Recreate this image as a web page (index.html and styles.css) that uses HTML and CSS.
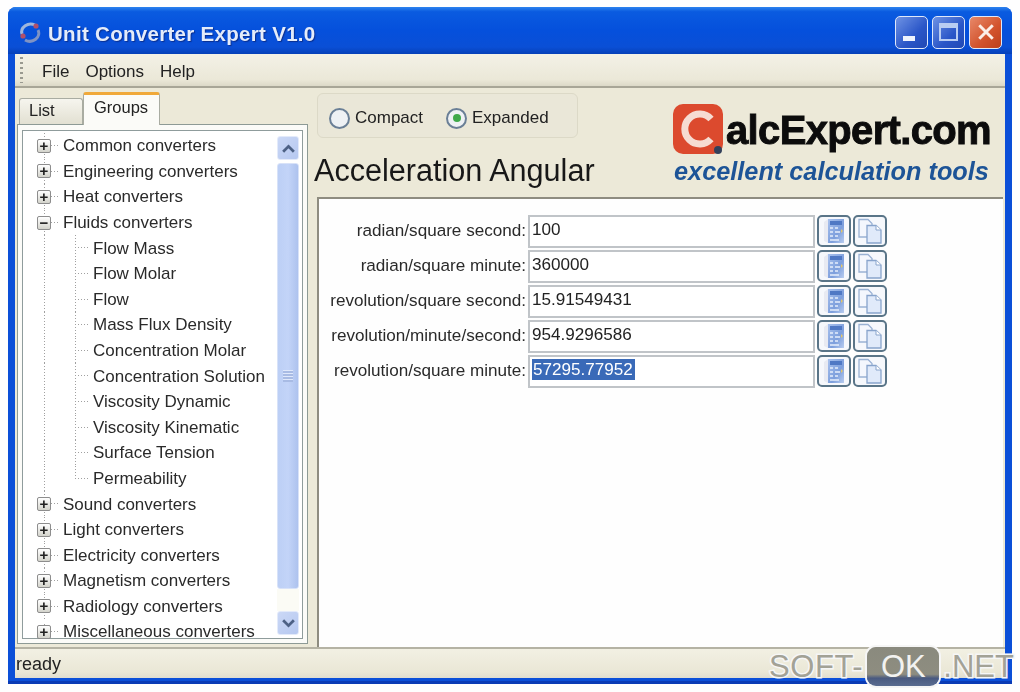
FILE: index.html
```html
<!DOCTYPE html>
<html lang="en">
<head>
    <meta charset="UTF-8">
    <meta name="viewport" content="width=device-width, initial-scale=1.0">
    <title>Unit Converter Expert V1.0</title>
    <link rel="stylesheet" href="styles.css">
</head>
<body>
    <svg class="icon-defs" width="0" height="0">
        <defs>
            <linearGradient id="calcFill" x1="0" y1="0" x2="1" y2="1">
                <stop offset="0" stop-color="#a9c2ee"/>
                <stop offset="0.6" stop-color="#7c9edc"/>
                <stop offset="1" stop-color="#b9cdf0"/>
            </linearGradient>
            <symbol id="calc" viewBox="0 0 24 28">
                <path d="M2 5 L6 2 V26 L2 24 Z" fill="#e8eaf2"/>
                <rect x="6" y="2" width="16" height="24" fill="url(#calcFill)"/>
                <rect x="8" y="4" width="12" height="4" fill="#4f78c4"/>
                <path d="M8 11h3M13 11h3M8 15h3M13 15h5M8 19h3M13 19h3M8 23h9" stroke="#e6eefb" stroke-width="1.6"/>
                <path d="M19 12l2 2-2 2" fill="#e2c56a"/>
            </symbol>
            <symbol id="copy" viewBox="0 0 28 28">
                <path d="M3 2.5 H12 L16 6.5 V20 H3 Z" fill="#f4f7fd" stroke="#9ab2d4" stroke-width="1.3"/>
                <path d="M11 8.5 H20 L25 13 V26 H11 Z" fill="#e0eafa" stroke="#88a4cc" stroke-width="1.3"/>
                <path d="M20 8.5 V13 H25" fill="#fff" stroke="#88a4cc" stroke-width="1"/>
            </symbol>
        </defs>
    </svg>

    <div class="window">
        <header class="titlebar">
            <svg class="app-icon" viewBox="0 0 24 24" width="24" height="24">
                <path d="M4 14 A9 8 0 0 1 17 5" fill="none" stroke="#9fb6dc" stroke-width="3"/>
                <path d="M20 10 A9 8 0 0 1 7 20" fill="none" stroke="#7f93c4" stroke-width="3"/>
                <circle cx="18" cy="6" r="2.6" fill="#b0506a"/>
                <circle cx="5" cy="16" r="2.6" fill="#b0506a"/>
            </svg>
            <span class="title-text">Unit Converter Expert V1.0</span>
            <div class="win-buttons">
                <button class="win-btn"><span class="glyph-min"></span></button>
                <button class="win-btn"><span class="glyph-max"></span></button>
                <button class="win-btn win-close">
                    <svg viewBox="0 0 16 16" width="18" height="18"><path d="M2 2 L14 14 M14 2 L2 14" stroke="#fbeee8" stroke-width="2.6"/></svg>
                </button>
            </div>
        </header>

        <div class="client">
            <nav class="menubar">
                <span class="grip"></span>
                <span class="menu-item">File</span>
                <span class="menu-item">Options</span>
                <span class="menu-item">Help</span>
            </nav>

            <div class="main">
                <aside class="side">
                    <div class="tabs">
                        <span class="tab">List</span>
                        <span class="tab tab-active">Groups</span>
                    </div>
                    <div class="tree-panel">
                        <ul class="tree">
                            <li class="node"><span class="exp">+</span>Common converters</li>
                            <li class="node"><span class="exp">+</span>Engineering converters</li>
                            <li class="node"><span class="exp">+</span>Heat converters</li>
                            <li class="node"><span class="exp">&minus;</span>Fluids converters</li>
                            <li class="leaf">Flow Mass</li>
                            <li class="leaf">Flow Molar</li>
                            <li class="leaf">Flow</li>
                            <li class="leaf">Mass Flux Density</li>
                            <li class="leaf">Concentration Molar</li>
                            <li class="leaf">Concentration Solution</li>
                            <li class="leaf">Viscosity Dynamic</li>
                            <li class="leaf">Viscosity Kinematic</li>
                            <li class="leaf">Surface Tension</li>
                            <li class="leaf">Permeability</li>
                            <li class="node"><span class="exp">+</span>Sound converters</li>
                            <li class="node"><span class="exp">+</span>Light converters</li>
                            <li class="node"><span class="exp">+</span>Electricity converters</li>
                            <li class="node"><span class="exp">+</span>Magnetism converters</li>
                            <li class="node"><span class="exp">+</span>Radiology converters</li>
                            <li class="node"><span class="exp">+</span>Miscellaneous converters</li>
                        </ul>
                        <div class="scrollbar">
                            <div class="sb-btn">
                                <svg viewBox="0 0 14 10" width="15" height="11"><path d="M2 8 L7 3 L12 8" fill="none" stroke="#4d6185" stroke-width="2.6"/></svg>
                            </div>
                            <div class="sb-thumb"><span class="sb-grip"></span></div>
                            <div class="sb-track"></div>
                            <div class="sb-btn">
                                <svg viewBox="0 0 14 10" width="15" height="11"><path d="M2 2 L7 7 L12 2" fill="none" stroke="#4d6185" stroke-width="2.6"/></svg>
                            </div>
                        </div>
                    </div>
                </aside>

                <section class="content">
                    <div class="content-top">
                        <div class="top-left">
                            <div class="view-box">
                                <label class="radio"><span class="radio-dot"></span>Compact</label>
                                <label class="radio"><span class="radio-dot radio-on"></span>Expanded</label>
                            </div>
                            <h1 class="unit-title">Acceleration Angular</h1>
                        </div>
                        <div class="logo">
                            <div class="logo-line">
                                <span class="logo-mark">
                                    <svg viewBox="0 0 50 50" width="50" height="50">
                                        <rect width="50" height="50" rx="10" fill="#dc4a2e"/>
                                        <path d="M38 15 A15 15 0 1 0 38 35" fill="none" stroke="#f6dcd2" stroke-width="7"/>
                                        <circle cx="45" cy="46" r="4" fill="#33405a"/>
                                    </svg>
                                </span>
                                <span class="logo-name">alcExpert.com</span>
                            </div>
                            <div class="logo-tag">excellent calculation tools</div>
                        </div>
                    </div>

                    <div class="results">
                        <div class="row">
                            <span class="row-label">radian/square second:</span>
                            <div class="row-input">100</div>
                            <button class="tool"><svg width="24" height="28"><use href="#calc"/></svg></button>
                            <button class="tool"><svg width="28" height="28"><use href="#copy"/></svg></button>
                        </div>
                        <div class="row">
                            <span class="row-label">radian/square minute:</span>
                            <div class="row-input">360000</div>
                            <button class="tool"><svg width="24" height="28"><use href="#calc"/></svg></button>
                            <button class="tool"><svg width="28" height="28"><use href="#copy"/></svg></button>
                        </div>
                        <div class="row">
                            <span class="row-label">revolution/square second:</span>
                            <div class="row-input">15.91549431</div>
                            <button class="tool"><svg width="24" height="28"><use href="#calc"/></svg></button>
                            <button class="tool"><svg width="28" height="28"><use href="#copy"/></svg></button>
                        </div>
                        <div class="row">
                            <span class="row-label">revolution/minute/second:</span>
                            <div class="row-input">954.9296586</div>
                            <button class="tool"><svg width="24" height="28"><use href="#calc"/></svg></button>
                            <button class="tool"><svg width="28" height="28"><use href="#copy"/></svg></button>
                        </div>
                        <div class="row">
                            <span class="row-label">revolution/square minute:</span>
                            <div class="row-input"><span class="selected">57295.77952</span></div>
                            <button class="tool"><svg width="24" height="28"><use href="#calc"/></svg></button>
                            <button class="tool"><svg width="28" height="28"><use href="#copy"/></svg></button>
                        </div>
                    </div>
                </section>
            </div>

            <footer class="statusbar">ready</footer>
        </div>
    </div>

    <div class="watermark">
        <span class="wm-text wm-soft">SOFT-</span><span class="wm-ok">OK</span><span class="wm-text">.NET</span>
    </div>
</body>
</html>
```

FILE: styles.css
```css
* {
    box-sizing: border-box;
    margin: 0;
    padding: 0;
}

html, body {
    height: 100%;
    overflow: hidden;
}

body {
    background: #fefefe;
    font-family: "Liberation Sans", Arial, sans-serif;
    color: #222;
    padding: 7px 8px 8px 8px;
    position: relative;
}

.icon-defs {
    position: absolute;
}

.window {
    width: 1004px;
    height: 677px;
    display: flex;
    flex-direction: column;
    background: #0b4fd8;
    border-radius: 8px 8px 0 0;
    padding: 0 7px 3px 7px;
    border-bottom: 3px solid #0a3bb5;
    filter: blur(0.45px);
}

/* title bar */
.titlebar {
    height: 47px;
    margin: 0 -7px;
    padding: 6px 7px 0 10px;
    display: flex;
    align-items: center;
    border-radius: 8px 8px 0 0;
    background: linear-gradient(#2d83ee 0, #0a5be0 10%, #0550dc 50%, #0a4fd6 85%, #0640b8 100%);
}

.app-icon {
    margin-right: 6px;
    margin-top: -4px;
}

.title-text {
    font-family: "Liberation Sans", sans-serif;
    font-weight: bold;
    font-size: 20.5px;
    letter-spacing: 0.3px;
    color: #e4ecfa;
    text-shadow: 1px 1px 1px #0a2f90;
    flex: 1;
}

.win-buttons {
    display: flex;
    gap: 4px;
    margin-right: 3px;
    margin-top: -3px;
}

.win-btn {
    width: 33px;
    height: 33px;
    border: 1px solid #dfe8fa;
    border-radius: 5px;
    background: linear-gradient(135deg, #6f93e4, #2a56c8 60%, #2149b4);
    display: flex;
    align-items: center;
    justify-content: center;
}

.win-close {
    background: linear-gradient(135deg, #e8896a, #d2522c 60%, #bd3f1c);
}

.glyph-min {
    width: 12px;
    height: 5px;
    background: #eef3fd;
    margin-top: 12px;
    margin-right: 6px;
}

.glyph-max {
    width: 19px;
    height: 18px;
    border: 2px solid #b9cdf2;
    border-top-width: 5px;
}

/* client area */
.client {
    flex: 1;
    display: flex;
    flex-direction: column;
    background: #ece9d8;
    min-height: 0;
}

.menubar {
    height: 34px;
    display: flex;
    align-items: center;
    padding: 4px 0 0 5px;
    background: linear-gradient(#f3f1e6, #ebe8d8 80%, #dcd9c8);
    border-bottom: 2px solid #a8a697;
    font-size: 17px;
}

.grip {
    width: 3px;
    height: 26px;
    margin-top: -4px;
    margin-right: 19px;
    background: repeating-linear-gradient(#9a9a90 0 2px, transparent 2px 5px);
}

.menu-item {
    margin-right: 16px;
}

.main {
    flex: 1;
    display: flex;
    min-height: 0;
    border-bottom: 2px solid #b5b3a4;
}

/* left side: tabs + tree */
.side {
    width: 291px;
    margin-left: 2px;
    display: flex;
    flex-direction: column;
    padding-bottom: 3px;
}

.tabs {
    height: 36px;
    display: flex;
    align-items: flex-end;
    padding-left: 2px;
    padding-top: 3px;
    font-size: 16.5px;
}

.tab {
    width: 64px;
    height: 26px;
    padding: 2px 0 0 9px;
    background: linear-gradient(#f6f5ee, #e2e0d2);
    border: 1px solid #a9aca2;
    border-bottom: none;
    border-radius: 3px 3px 0 0;
}

.tab-active {
    width: 77px;
    height: 33px;
    padding: 3px 0 0 10px;
    background: #fbfbf8;
    border-top: 3px solid #f0a93a;
    position: relative;
    top: 1px;
}

.tree-panel {
    flex: 1;
    display: flex;
    min-height: 0;
    background: #fbfbf8;
    border: 1px solid #8d9a95;
    padding: 5px 4px 4px 4px;
}

.tree {
    flex: 1;
    list-style: none;
    background: #fff;
    border: 1px solid #8f9c9c;
    border-right: none;
    padding-top: 2px;
    font-size: 17px;
    color: #2a2a2a;
}

.node, .leaf {
    height: 25.6px;
    line-height: 25px;
    white-space: nowrap;
    display: flex;
    align-items: center;
}

.node {
    padding-left: 14px;
    background-image:
        repeating-linear-gradient(90deg, #a0a0a0 0 1px, transparent 1px 3px),
        repeating-linear-gradient(#a0a0a0 0 1px, transparent 1px 3px);
    background-size: 9px 1px, 1px 100%;
    background-position: 28px 12px, 21px 0;
    background-repeat: no-repeat;
}

/* last row touches the bottom of the list */
.node:last-child {
    height: 15px;
    line-height: 15px;
    margin-top: 5px;
    background-position: 28px 7px, 21px 0;
}

.exp {
    width: 14px;
    height: 14px;
    margin-right: 12px;
    border: 1px solid #8d8d8d;
    border-radius: 2px;
    background: linear-gradient(#fff, #d4d4cc);
    color: #222;
    font-size: 15px;
    font-weight: bold;
    line-height: 11px;
    text-align: center;
}

.leaf {
    padding-left: 70px;
    background-image:
        repeating-linear-gradient(90deg, #a0a0a0 0 1px, transparent 1px 3px),
        repeating-linear-gradient(#a0a0a0 0 1px, transparent 1px 3px),
        repeating-linear-gradient(#a0a0a0 0 1px, transparent 1px 3px);
    background-size: 14px 1px, 1px 100%, 1px 100%;
    background-position: 52px 12px, 52px 0, 21px 0;
    background-repeat: no-repeat;
}

.leaf:nth-child(14) {
    background-size: 14px 1px, 1px 13px, 1px 100%;
}

/* scrollbar */
.scrollbar {
    width: 26px;
    display: flex;
    flex-direction: column;
    background: #fff;
    border: 1px solid #8f9c9c;
    border-left: none;
    padding: 5px 3px 3px 0;
}

.sb-btn {
    height: 24px;
    display: flex;
    align-items: center;
    justify-content: center;
    background: linear-gradient(135deg, #cbd8f6, #b6c8f0);
    border: 1px solid #e3eafa;
    border-radius: 3px;
}

.sb-thumb {
    height: 426px;
    margin-top: 3px;
    background: linear-gradient(90deg, #bccff5, #c3d4f8 50%, #adc2ee);
    border: 1px solid #d8e2f8;
    border-radius: 3px;
    display: flex;
    align-items: center;
    justify-content: center;
}

.sb-grip {
    width: 10px;
    height: 12px;
    background: repeating-linear-gradient(#dfe8fb 0 1px, #a8bbe4 1px 3px);
}

.sb-track {
    flex: 1;
    background: #fbfbf5;
}

/* right side */
.content {
    flex: 1;
    display: flex;
    flex-direction: column;
    margin-left: 9px;
    margin-right: 2px;
    min-width: 0;
}

.content-top {
    height: 109px;
    display: flex;
    justify-content: space-between;
    flex-shrink: 0;
}

.top-left {
    padding-top: 5px;
}

.view-box {
    width: 261px;
    height: 45px;
    display: flex;
    align-items: center;
    gap: 23px;
    padding: 5px 0 0 11px;
    border: 1px solid #dcd9c7;
    border-radius: 6px;
    background: #eae7d8;
    font-size: 17px;
}

.radio {
    display: flex;
    align-items: center;
    gap: 5px;
}

.radio-dot {
    width: 21px;
    height: 21px;
    border-radius: 50%;
    border: 2px solid #6a7f96;
    background: #eef1f4;
    display: flex;
    align-items: center;
    justify-content: center;
}

.radio-on::after {
    content: "";
    width: 8px;
    height: 8px;
    border-radius: 50%;
    background: #3fa94a;
}

.unit-title {
    font-size: 30.6px;
    font-weight: normal;
    color: #181818;
    margin-left: -3px;
    margin-top: 16px;
    line-height: 33px;
    white-space: nowrap;
}

.logo {
    width: 322px;
    padding-top: 16px;
    margin-right: 8px;
}

.logo-line {
    display: flex;
    align-items: flex-end;
    height: 50px;
}

.logo-mark {
    display: block;
    height: 50px;
}

.logo-name {
    font-size: 40px;
    font-weight: bold;
    color: #0c0c0c;
    line-height: 44px;
    letter-spacing: -0.65px;
    -webkit-text-stroke: 0.9px #0c0c0c;
    margin: 0 0 2px 3px;
}

.logo-tag {
    font-size: 25.3px;
    font-weight: bold;
    font-style: italic;
    color: #1d5497;
    margin: 3px 0 0 1px;
    white-space: nowrap;
}

.results {
    flex: 1;
    background: #fefefe;
    border-top: 2px solid #8e8c80;
    border-left: 2px solid #8e8c80;
    padding-top: 16px;
    display: flex;
    flex-direction: column;
    gap: 3px;
}

.row {
    height: 32px;
    display: flex;
    align-items: center;
    gap: 2px;
    font-size: 17.1px;
}

.row-label {
    width: 207px;
    text-align: right;
    white-space: nowrap;
    color: #2a2a2a;
}

.row-input {
    width: 287px;
    height: 33px;
    border: 2px solid #c0c4c8;
    padding-left: 2px;
    line-height: 26px;
    background: #fff;
    color: #222;
}

.selected {
    background: #3a6ab8;
    color: #fff;
    padding: 1px 2px 1px 1px;
}

.tool {
    width: 34px;
    height: 32px;
    border: 2px solid #5a7588;
    border-radius: 5px;
    background: #f6f8fc;
    display: flex;
    align-items: center;
    justify-content: center;
}

.statusbar {
    height: 29px;
    padding: 5px 1px;
    font-size: 18px;
    background: linear-gradient(#f2f0e3, #eae7d6 80%, #e0ddd0);
}

/* watermark sits on top of the window */
.watermark {
    position: absolute;
    left: 769px;
    top: 647px;
    height: 39px;
    display: flex;
    align-items: center;
    font-size: 31px;
}

.wm-text {
    color: #a3a296;
    -webkit-text-stroke: 3px #f6f6f6;
    paint-order: stroke fill;
}

.wm-soft {
    letter-spacing: 0.6px;
}

.wm-ok {
    width: 72px;
    height: 39px;
    margin: 0 4px 0 4px;
    text-align: center;
    line-height: 39px;
    color: #f2f2f0;
    background: linear-gradient(#8a8a7e 0, #8e8d80 70%, #4a5a80 80%, #5a6c90 100%);
    border-radius: 9px;
    box-shadow: 0 0 0 2px #f6f6f6;
}
```
